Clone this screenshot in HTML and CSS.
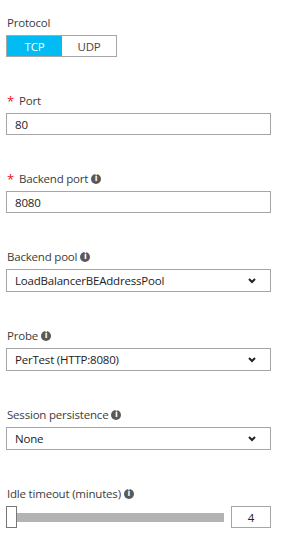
FILE: index.html
```html
<!DOCTYPE html>
<html lang="en">
<head>
  <meta charset="UTF-8">
  <meta name="viewport" content="width=device-width, initial-scale=1.0">
  <title>Load balancing rule</title>
  <link rel="stylesheet" href="styles.css">
</head>
<body>
  <form class="blade">
    <div class="field">
      <div class="label">Protocol</div>
      <div class="toggle">
        <span class="toggle-opt active">TCP</span>
        <span class="toggle-opt">UDP</span>
      </div>
    </div>

    <div class="field">
      <div class="label"><span class="req">*</span>Port</div>
      <div class="box">80</div>
    </div>

    <div class="field">
      <div class="label"><span class="req">*</span>Backend port <span class="info">i</span></div>
      <div class="box">8080</div>
    </div>

    <div class="field">
      <div class="label">Backend pool <span class="info">i</span></div>
      <div class="box select">
        <span>LoadBalancerBEAddressPool</span>
        <svg class="chev" width="8" height="6" viewBox="0 0 8 6"><path d="M1 1 L4 4 L7 1" fill="none" stroke="#222" stroke-width="2"/></svg>
      </div>
    </div>

    <div class="field">
      <div class="label">Probe <span class="info">i</span></div>
      <div class="box select">
        <span>PerTest (HTTP:8080)</span>
        <svg class="chev" width="8" height="6" viewBox="0 0 8 6"><path d="M1 1 L4 4 L7 1" fill="none" stroke="#222" stroke-width="2"/></svg>
      </div>
    </div>

    <div class="field">
      <div class="label">Session persistence <span class="info">i</span></div>
      <div class="box select">
        <span>None</span>
        <svg class="chev" width="8" height="6" viewBox="0 0 8 6"><path d="M1 1 L4 4 L7 1" fill="none" stroke="#222" stroke-width="2"/></svg>
      </div>
    </div>

    <div class="field">
      <div class="label">Idle timeout (minutes) <span class="info">i</span></div>
      <div class="slider-row">
        <div class="slider">
          <span class="thumb"></span>
          <span class="track"></span>
        </div>
        <div class="box num">4</div>
      </div>
    </div>
  </form>
</body>
</html>
```

FILE: styles.css
```css
:root {
  --border: #a6a6a6;
  --text: #333;
  --accent: #00bcf2;
}

body {
  margin: 0;
  background: #fff;
  color: var(--text);
  font-family: 'Open Sans', 'Liberation Sans', sans-serif;
  font-size: 11.5px;
  letter-spacing: -0.2px;
}

.blade {
  padding: 13px 13px 0 6px;
}

.field {
  margin-bottom: 34px;
}

.label {
  height: 20px;
  line-height: 20px;
  margin-bottom: 2px;
  color: #3c3c3c;
  display: flex;
  align-items: center;
  padding-left: 1px;
}

.req {
  color: #e81123;
  font-size: 13px;
  margin-right: 5px;
}

.info {
  display: inline-flex;
  align-items: center;
  justify-content: center;
  width: 10px;
  height: 10px;
  border-radius: 50%;
  background: #595959;
  color: #fff;
  font-size: 8px;
  font-weight: 700;
  font-family: 'DejaVu Sans', sans-serif;
  letter-spacing: 0;
  margin-left: 3px;
  line-height: 1;
}

.toggle {
  display: flex;
  width: 111px;
  height: 22px;
  border: 1px solid var(--border);
  box-sizing: border-box;
}

.toggle-opt {
  flex: 1;
  display: flex;
  align-items: center;
  justify-content: center;
  color: #444;
}

.toggle-opt.active {
  flex: 0 0 55px;
  background: var(--accent);
  color: #fff;
}

.box {
  height: 22px;
  box-sizing: border-box;
  border: 1px solid var(--border);
  display: flex;
  align-items: center;
  padding: 0 8px;
  color: #222;
}

.select {
  justify-content: space-between;
  height: 23px;
  padding-right: 14px;
}

.slider-row {
  display: flex;
  align-items: center;
  gap: 7px;
}

.slider {
  flex: 1;
  display: flex;
  align-items: center;
  height: 22px;
}

.thumb {
  width: 11px;
  height: 22px;
  box-sizing: border-box;
  border: 1px solid #777;
  background: #fff;
}

.track {
  flex: 1;
  height: 9px;
  background: #b3b3b3;
}

.num {
  width: 40px;
  justify-content: center;
  padding: 0;
}
```
